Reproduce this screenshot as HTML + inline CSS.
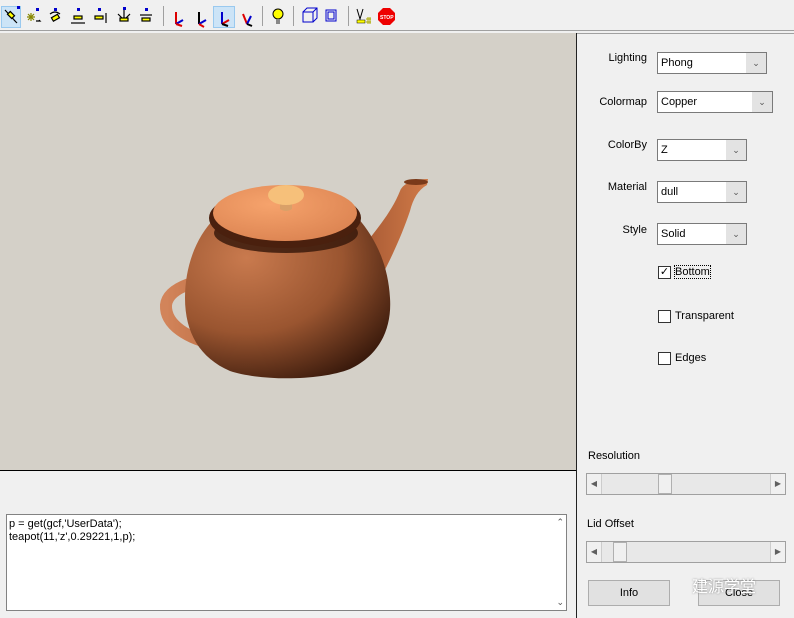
<!DOCTYPE html>
<html><head><meta charset="utf-8"><style>
*{margin:0;padding:0;box-sizing:border-box}
body{width:794px;height:618px;overflow:hidden;background:#f0f0f0;font-family:"Liberation Sans",Arial,sans-serif;font-size:11px;color:#000;position:relative}
.a{position:absolute}
.tb{left:0;top:0;width:794px;height:31px;background:#f0f0f0;border-bottom:1px solid #a0a0a0}
.sel{background:#cce4f7;border:1px solid #99c9ef}
.lbl{text-align:right;width:80px}
.dd{background:#fff;border:1px solid #7a7a7a;height:22px}
.dd span{position:absolute;left:3px;top:4px}
.dd i{position:absolute;right:0;top:0;width:20px;height:20px;background:#e3e3e3;font-style:normal;text-align:center;line-height:20px;color:#555;font-size:9px}
.cb{width:13px;height:13px;border:1px solid #333;background:#fff}
.sl{height:22px;background:#e8e8e8;border:1px solid #a0a0a0}
.sl b{position:absolute;top:0;width:15px;height:20px;background:#f0f0f0;font-size:8px;color:#606060;text-align:center;line-height:20px;font-weight:normal}
.btn{height:26px;background:#e1e1e1;border:1px solid #adadad;text-align:center;line-height:24px}
</style></head><body>
<div class="a tb"></div>
<div class="a sel" style="left:1px;top:6px;width:20px;height:22px"></div>
<div class="a sel" style="left:213px;top:6px;width:22px;height:22px"></div>
<svg class="a" style="left:0;top:0" width="400" height="31">
<g stroke="#000" stroke-width="1.2" fill="none">
<path d="M5 10 L16 22 M14 20 l3 3"/><rect x="8" y="13" width="6" height="4" fill="#ff0" transform="rotate(45 11 15)"/>
<path d="M27 17h8M31 13v8M28 14l6 6M34 14l-6 6" stroke="#880"/><path d="M36 21h4l-1 -1"/>
<path d="M50 14 q5 -4 10 0" /><rect x="52" y="16" width="7" height="4" fill="#ff0" transform="rotate(-30 55 18)"/>
<rect x="74" y="16" width="8" height="3" fill="#ff0"/><path d="M71 23h14"/>
<rect x="95" y="16" width="8" height="3" fill="#ff0"/><path d="M106 13v10"/>
<rect x="120" y="18" width="8" height="3" fill="#ff0"/><path d="M118 14l4 4M130 14l-4 4M124 8v10"/>
<rect x="142" y="18" width="8" height="3" fill="#ff0"/><path d="M140 15h12"/>
</g>
<g fill="#00c"><rect x="17" y="6" width="3" height="3"/><rect x="36" y="8" width="3" height="3"/><rect x="54" y="8" width="3" height="3"/><rect x="77" y="8" width="3" height="3"/><rect x="98" y="8" width="3" height="3"/><rect x="123" y="7" width="3" height="3"/><rect x="145" y="8" width="3" height="3"/></g>
<rect x="163" y="6" width="1" height="20" fill="#a0a0a0"/>
<g stroke-width="2" fill="none">
<path d="M176 12v12" stroke="#d00"/><path d="M176 24l7-4" stroke="#00c"/><path d="M176 24l6 2" stroke="#d00"/>
<path d="M199 12v12" stroke="#000"/><path d="M199 24l7-4" stroke="#00c"/><path d="M199 24l5 3" stroke="#d00"/>
<path d="M222 12v12" stroke="#00c"/><path d="M222 24l7-4" stroke="#d00"/><path d="M222 24l6 2" stroke="#000"/>
<path d="M243 14l4 10" stroke="#d00"/><path d="M247 24l4-8" stroke="#00c"/><path d="M247 24l5 2" stroke="#000"/>
</g>
<rect x="262" y="6" width="1" height="20" fill="#a0a0a0"/>
<circle cx="278" cy="14" r="5" fill="#ff0" stroke="#000"/><rect x="276" y="19" width="4" height="5" fill="#888"/>
<rect x="293" y="6" width="1" height="20" fill="#a0a0a0"/>
<g stroke="#00c" fill="none"><rect x="303" y="12" width="10" height="10"/><path d="M303 12l4-4h10v10l-4 4M313 12l4-4"/><rect x="326" y="10" width="10" height="11"/><rect x="328" y="12" width="6" height="7"/></g>
<rect x="348" y="6" width="1" height="20" fill="#a0a0a0"/>
<path d="M357 9l3 10 3-10" stroke="#000" fill="none"/><rect x="357" y="20" width="8" height="3" fill="#ff0" stroke="#000" stroke-width=".5"/><path d="M366 19h5M366 22h5M368 17v7M370 17v7" stroke="#aa0"/>
<polygon points="383,8 390,8 395,13 395,20 390,25 383,25 378,20 378,13" fill="#e00"/><text x="380" y="19" font-size="5" fill="#fff" font-weight="bold">STOP</text>
</svg>
<div class="a" style="left:0;top:33px;width:576px;height:437px;background:#d4d0c8"></div>
<div class="a" style="left:0;top:470px;width:577px;height:1px;background:#000"></div>
<div class="a" style="left:576px;top:33px;width:1px;height:585px;background:#222"></div>
<div class="a" style="left:577px;top:33px;width:217px;height:1px;background:#a0a0a0"></div>
<svg class="a" style="left:0;top:33px" width="576" height="437">
<defs>
<radialGradient id="bd" cx="0.3" cy="0.25" r="0.85"><stop offset="0" stop-color="#c97a4e"/><stop offset="0.55" stop-color="#9a5530"/><stop offset="1" stop-color="#3a1a0c"/></radialGradient>
<radialGradient id="ld" cx="0.4" cy="0.35" r="0.7"><stop offset="0" stop-color="#f6a36c"/><stop offset="1" stop-color="#dc8452"/></radialGradient>
<linearGradient id="sp" x1="0" x2="1"><stop offset="0" stop-color="#a85a34"/><stop offset="1" stop-color="#d07a48"/></linearGradient>
<linearGradient id="hd" x1="0" x2="1"><stop offset="0" stop-color="#d2845a"/><stop offset="1" stop-color="#b8683e"/></linearGradient>
</defs>
<path d="M362 215 C378 195 392 178 400 158 C403 150 415 146 428 146 L427 152 C418 157 413 166 410 178 C402 202 390 228 378 250 Z" fill="url(#sp)"/>
<ellipse cx="416" cy="149" rx="12" ry="3" fill="#7a3a1a"/>
<path d="M238 244 C200 244 168 254 166 272 C165 292 188 306 218 312" fill="none" stroke="url(#hd)" stroke-width="12" stroke-linecap="round"/>
<path d="M215 185 C195 205 185 235 185 265 C185 300 200 325 230 338 C260 348 320 348 350 336 C380 322 392 295 390 265 C388 230 375 205 358 185 Z" fill="url(#bd)"/>
<ellipse cx="286" cy="200" rx="72" ry="20" fill="#3a1a0c" opacity="0.85"/>
<ellipse cx="285" cy="185" rx="76" ry="30" fill="#4a200e"/>
<ellipse cx="285" cy="180" rx="72" ry="28" fill="url(#ld)"/>
<path d="M280 166 L280 176 Q286 180 292 176 L292 166 Z" fill="#d9a068"/>
<ellipse cx="286" cy="162" rx="18" ry="10" fill="#f6c07a"/>
</svg>
<div class="a" style="left:6px;top:514px;width:561px;height:97px;background:#fff;border:1px solid #828282">
<div style="position:absolute;left:2px;top:3px;line-height:13px">p = get(gcf,'UserData');<br>teapot(11,'z',0.29221,1,p);</div>
<div style="position:absolute;right:2px;top:2px;font-size:9px;color:#555">&#8963;</div>
<div style="position:absolute;right:2px;bottom:2px;font-size:9px;color:#555">&#8964;</div>
</div>
<div class="a lbl" style="left:567px;top:52px">Lighting</div>
<div class="a dd" style="left:657px;top:52px;width:110px"><span>Phong</span><i>&#8964;</i></div>
<div class="a lbl" style="left:567px;top:96px">Colormap</div>
<div class="a dd" style="left:657px;top:91px;width:116px"><span>Copper</span><i>&#8964;</i></div>
<div class="a lbl" style="left:567px;top:139px">ColorBy</div>
<div class="a dd" style="left:657px;top:139px;width:90px"><span>Z</span><i>&#8964;</i></div>
<div class="a lbl" style="left:567px;top:181px">Material</div>
<div class="a dd" style="left:657px;top:181px;width:90px"><span>dull</span><i>&#8964;</i></div>
<div class="a lbl" style="left:567px;top:224px">Style</div>
<div class="a dd" style="left:657px;top:223px;width:90px"><span>Solid</span><i>&#8964;</i></div>
<div class="a cb" style="left:658px;top:266px;font-size:11px;line-height:10px;text-align:center">&#10003;</div>
<div class="a" style="left:675px;top:266px;outline:1px dotted #000">Bottom</div>
<div class="a cb" style="left:658px;top:310px"></div><div class="a" style="left:675px;top:310px">Transparent</div>
<div class="a cb" style="left:658px;top:352px"></div><div class="a" style="left:675px;top:352px">Edges</div>
<div class="a" style="left:588px;top:450px">Resolution</div>
<div class="a sl" style="left:586px;top:473px;width:200px"><b style="left:0;border-right:1px solid #ccc">&#9664;</b><div class="a" style="left:71px;top:0;width:14px;height:20px;background:#f0f0f0;border:1px solid #b0b0b0"></div><b style="right:0;border-left:1px solid #ccc">&#9654;</b></div>
<div class="a" style="left:587px;top:518px">Lid Offset</div>
<div class="a sl" style="left:586px;top:541px;width:200px"><b style="left:0;border-right:1px solid #ccc">&#9664;</b><div class="a" style="left:26px;top:0;width:14px;height:20px;background:#f0f0f0;border:1px solid #b0b0b0"></div><b style="right:0;border-left:1px solid #ccc">&#9654;</b></div>
<div class="a btn" style="left:588px;top:580px;width:82px">Info</div>
<div class="a btn" style="left:698px;top:580px;width:82px">Close</div>
<div class="a" style="left:692px;top:573px;font-family:'Noto Sans CJK SC',sans-serif;font-size:16px;color:#fff;text-shadow:0 0 2px #888">建源学堂</div>
</body></html>
